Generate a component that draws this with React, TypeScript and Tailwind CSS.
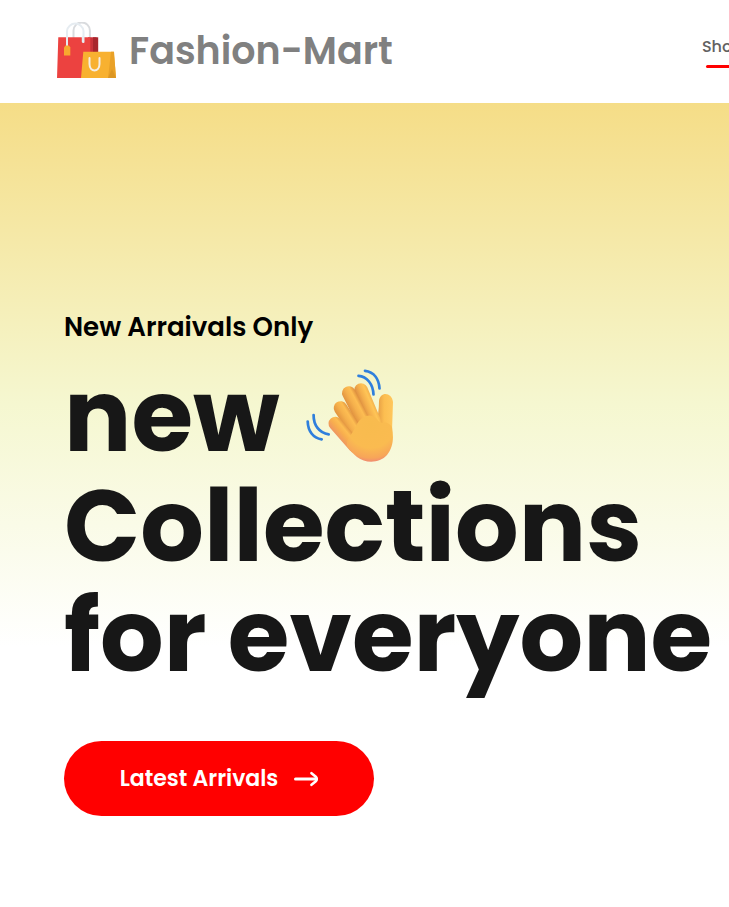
import React from "react";

function BagsLogo() {
  return (
    <svg viewBox="0 0 60 56" className="h-[56px] w-[60px] shrink-0" aria-hidden="true">
      <path d="M16.500 16V8.500a8.200 8 0 0 1 16.400 0V16" fill="none" stroke="#d9dbde" strokeWidth="2" />
      <path d="M31 15.300h8.500l1.500 14v26.700H31z" fill="#c9323a" />
      <path d="M36 15.300h5.200V31H36z" fill="#a8262d" />
      <path d="M1.300 15.300h32V56H0z" fill="#ec4240" />
      <path d="M25.800 15.300v4.500" fill="none" stroke="#e6ecf1" strokeWidth="2" strokeLinecap="round" />
      <path d="M10 24V9a8.300 8.300 0 0 1 16.500 0v11" fill="none" stroke="#e6ecf1" strokeWidth="2" strokeLinecap="round" />
      <path d="M8.500 23.500h3.500l1.300 2v8H7v-8z" fill="#f8a82f" />
      <path d="M26.300 29.700h30.500L59 56H24z" fill="#f8b130" />
      <path d="M54 29.700h3L59 56h-8z" fill="#e9a127" />
      <path d="M55 47l4 9h-8z" fill="#dc9623" />
      <path d="M32.500 36v6c0 8.500 10 8.500 10 0v-6" fill="none" stroke="#f5eee3" strokeWidth="2" strokeLinecap="round" />
    </svg>
  );
}

function WavingHand() {
  return (
    <svg viewBox="0 0 90 94" className="h-[94px] w-[90px] shrink-0" role="img" aria-label="Waving hand">
      <defs>
        <radialGradient id="palm" gradientUnits="userSpaceOnUse" cx="66" cy="55" r="40">
          <stop offset="0" stopColor="#f8bb4e" />
          <stop offset="0.600" stopColor="#fabb50" />
          <stop offset="0.850" stopColor="#f7a559" />
          <stop offset="1" stopColor="#ee7c80" />
        </radialGradient>
        <linearGradient id="index" gradientUnits="userSpaceOnUse" x1="50" y1="24" x2="64" y2="18">
          <stop offset="0" stopColor="#d98a3f" />
          <stop offset="0.350" stopColor="#f3ad4b" />
          <stop offset="0.700" stopColor="#ffc556" />
          <stop offset="1" stopColor="#eca648" />
        </linearGradient>
        <linearGradient id="middle" gradientUnits="userSpaceOnUse" x1="37" y1="27" x2="50" y2="20">
          <stop offset="0" stopColor="#e0913f" />
          <stop offset="0.400" stopColor="#f5b04c" />
          <stop offset="0.700" stopColor="#fdbd52" />
          <stop offset="1" stopColor="#d9893b" />
        </linearGradient>
        <linearGradient id="ring" gradientUnits="userSpaceOnUse" x1="29" y1="42" x2="42" y2="34">
          <stop offset="0" stopColor="#e0913f" />
          <stop offset="0.400" stopColor="#f5b04c" />
          <stop offset="0.700" stopColor="#fdbd52" />
          <stop offset="1" stopColor="#d9893b" />
        </linearGradient>
        <linearGradient id="little" gradientUnits="userSpaceOnUse" x1="25" y1="58" x2="36" y2="49">
          <stop offset="0" stopColor="#ef9760" />
          <stop offset="0.400" stopColor="#f8ae4e" />
          <stop offset="0.700" stopColor="#fdbd52" />
          <stop offset="1" stopColor="#df9040" />
        </linearGradient>
        <linearGradient id="thumb" gradientUnits="userSpaceOnUse" x1="72" y1="0" x2="88" y2="0">
          <stop offset="0" stopColor="#e49a43" />
          <stop offset="0.450" stopColor="#fcbe51" />
          <stop offset="1" stopColor="#ffc75c" />
        </linearGradient>
      </defs>
      <path d="M71 56C73 48 74 40 74 32C75 22 87 23 88 33L87 62C86 68 78 68 71 66Z" fill="url(#thumb)" />
      <g fill="none" strokeLinecap="round" strokeWidth="13.600">
        <path d="M56 21L69 52" stroke="url(#index)" />
        <path d="M43.800 24L60 56" stroke="url(#middle)" />
        <path d="M35.500 39L52 64" stroke="url(#ring)" />
        <path d="M30.300 54.500L50 77" stroke="url(#little)" />
      </g>
      <path d="M42 77C41 70 47 66 51 57C55 48 64 43 71 49C73 51 74 53 77 54C81 52 85 55 87 58C89 70 88 78 82 86C75 94 61 95 52 88C48 85 45 81 42 77Z" fill="url(#palm)" />
      <g fill="none" stroke="#2f7fdc" strokeWidth="2.700" strokeLinecap="round">
        <path d="M53.500 6.800C62 7.500 68 15 68.500 25.500" />
        <path d="M60 1.800C69 3 74 10 74.500 19.500" />
        <path d="M2.700 52.500C3 62 8 69 16.700 70.300" />
        <path d="M8.600 46C8.500 56 14 64 23.700 65.300" />
      </g>
    </svg>
  );
}

function ArrowIcon() {
  return (
    <svg viewBox="0 0 24 16" className="h-4 w-6 shrink-0" fill="none" stroke="currentColor" strokeWidth="3" strokeLinecap="round" strokeLinejoin="round" aria-hidden="true">
      <path d="M1.500 8H22" />
      <path d="M17.500 2.200L21.500 5.500Q24 8 21.500 10.500L17.500 13.800" strokeWidth="2.600" />
    </svg>
  );
}

export default function App() {
  return (
    <div className="min-h-screen overflow-x-hidden bg-white font-['Poppins','Inter',sans-serif]">
      <header className="flex h-[103px] items-center pb-[3px] pl-[57px]">
        <a href="#home" className="flex shrink-0 items-center gap-3">
          <BagsLogo />
          <span className="whitespace-nowrap text-[38px] font-semibold text-[#808080]">Fashion-Mart</span>
        </a>
        <nav className="-mr-[14px] ml-auto shrink-0">
          <a href="#shop" className="flex flex-col items-center gap-[6px] pt-[3px] text-base font-medium text-[#626262]">
            Shop
            <span className="h-[3px] w-4/5 rounded-full bg-[#ff0000]" />
          </a>
        </nav>
      </header>
      <main className="bg-[linear-gradient(180deg,#f5dd87_0,#f5f7d0_300px,#ffffff_544px)] px-16 pt-[204px] pb-[91px]">
        <p className="text-[26px] leading-10 font-semibold text-black">New Arraivals Only</p>
        <h1 className="mt-[14px] text-[100px] leading-[110px] font-bold text-[#171717]">
          <span className="flex items-center gap-[25px]">new <WavingHand /></span>
          <span className="block">Collections</span>
          <span className="block whitespace-nowrap">for everyone</span>
        </h1>
        <button type="button" className="mt-[50px] flex h-[75px] w-[310px] items-center justify-center gap-4 rounded-full bg-[#ff0000] text-[22px] font-semibold text-white">
          Latest Arrivals
          <ArrowIcon />
        </button>
      </main>
    </div>
  );
}
